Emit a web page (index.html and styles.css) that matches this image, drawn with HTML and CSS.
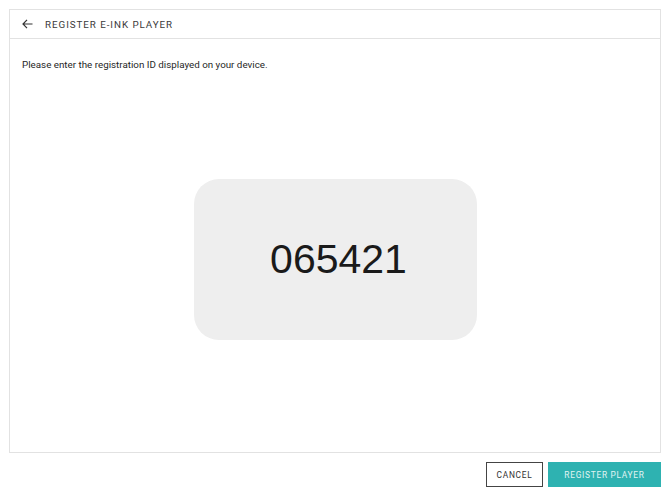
FILE: index.html
```html
<!DOCTYPE html>
<html>
<head>
<meta charset="utf-8">
<link rel="stylesheet" href="styles.css">
</head>
<body>
<div class="page">
  <div class="card">
    <div class="header">
      <svg class="back" width="11" height="10" viewBox="0 0 11 10"><path d="M10.5 5H1M5 0.9L1 5l4 4.1" fill="none" stroke="#333" stroke-width="1.2"/></svg>
      <span class="title">REGISTER E-INK PLAYER</span>
    </div>
    <div class="body">
      <p class="hint">Please enter the registration ID displayed on your device.</p>
      <div class="center">
        <div class="code">065421</div>
      </div>
    </div>
  </div>
  <div class="actions">
    <button class="btn cancel">CANCEL</button>
    <button class="btn primary">REGISTER PLAYER</button>
  </div>
</div>
</body>
</html>
```
FILE: styles.css
```css
* { box-sizing: border-box; }
html, body { margin: 0; padding: 0; background: #fff; }
body { font-family: "Liberation Sans", Arial, sans-serif; color: #222; }
.page { padding: 9px 9px 0 9px; width: 670px; }
.card {
  border: 1px solid #e2e2e2;
  height: 444px;
  display: flex;
  flex-direction: column;
}
.header {
  height: 29px;
  border-bottom: 1px solid #e2e2e2;
  display: flex;
  align-items: center;
  padding-left: 12px;
}
.back { margin-right: 12px; }
.title { font-family: Roboto, "Liberation Sans", sans-serif; font-size: 9.8px; letter-spacing: 0.95px; color: #3a3a3a; }
.body { flex: 1; display: flex; flex-direction: column; padding: 0 12px; }
.hint { margin: 20px 0 0 0; font-family: Roboto, "Liberation Sans", sans-serif; font-size: 9.8px; color: #1f1f1f; }
.center { flex: 1; display: flex; justify-content: center; padding-top: 109px; padding-left: 1px; }
.code {
  width: 283px;
  height: 161px;
  background: #eeeeee;
  border-radius: 25px;
  display: flex;
  align-items: center;
  justify-content: center;
  font-size: 41px;
  color: #1a1a1a;
  padding-left: 6px;
}
.actions { display: flex; justify-content: flex-end; gap: 5px; margin-top: 9px; }
.btn {
  height: 25px;
  font-family: Roboto, "Liberation Sans", sans-serif;
  font-size: 8.4px;
  letter-spacing: 0.7px;
  padding: 0;
  cursor: pointer;
}
.cancel { width: 57px; background: #fff; border: 1px solid #444; color: #333; }
.primary { width: 113px; background: #2eb2b1; border: 1px solid #2eb2b1; color: #e0f4f3; }
```
